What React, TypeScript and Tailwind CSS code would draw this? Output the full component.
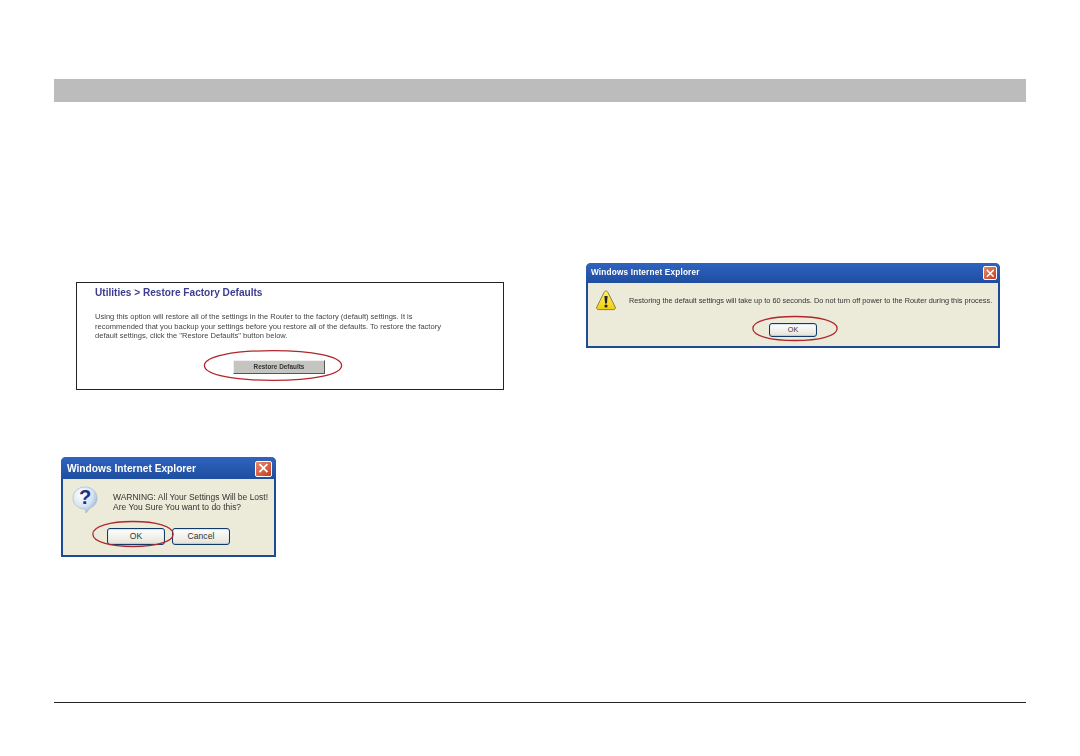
const font = { fontFamily: '"Liberation Sans", Arial, sans-serif' };

function Ellipse() {
  return (
    <svg className="absolute inset-0 w-full h-full overflow-visible" viewBox="0 0 100 100" preserveAspectRatio="none" fill="none">
      <path d="M50 2 C78 2 99 20 99 50 C99 80 78 98 50 98 C22 98 1 80 1 50 C1 20 22 2 50 2 Z" stroke="#b0262c" strokeWidth="1.3" vectorEffect="non-scaling-stroke" />
    </svg>
  );
}

function CloseBtn({ className }: { className: string }) {
  return (
    <div className={`rounded-[2px] border border-white bg-gradient-to-br from-[#e8896c] to-[#c43a1c] flex items-center justify-center shrink-0 ${className}`}>
      <svg viewBox="0 0 12 12" className="w-[72%] h-[72%]">
        <path d="M2 2 L10 10 M10 2 L2 10" stroke="#fff" strokeWidth="2.1" strokeLinecap="square" />
      </svg>
    </div>
  );
}

function XpButton({ label, className }: { label: string; className: string }) {
  return (
    <div className={`rounded-[3px] border border-[#123a68] bg-gradient-to-b from-white to-[#e6e4d8] shadow-[inset_0_-1px_1px_#b9c9e6,inset_0_1px_1px_#d6e2f5] flex items-center justify-center text-[#333] ${className}`}>
      {label}
    </div>
  );
}

function QuestionIcon() {
  return (
    <svg viewBox="0 0 26 28" className="w-[26px] h-[28px] shrink-0">
      <defs>
        <radialGradient id="q" cx="0.35" cy="0.3" r="0.8">
          <stop offset="0" stopColor="#ffffff" />
          <stop offset="0.6" stopColor="#d4e2f2" />
          <stop offset="1" stopColor="#8fa9c9" />
        </radialGradient>
      </defs>
      <path d="M13 1 C20 1 25 6 25 12 C25 18 21 21 18 22 L14 27 L13.5 23 C6 23 1 18 1 12 C1 6 6 1 13 1 Z" fill="url(#q)" stroke="#9fb3cc" strokeWidth="0.6" />
      <text x="13" y="18" textAnchor="middle" fontSize="20" fontWeight="700" fill="#1c2f8a" style={font}>?</text>
    </svg>
  );
}

function WarningIcon() {
  return (
    <svg viewBox="0 0 20 21" className="w-[20px] h-[21px] shrink-0">
      <defs>
        <linearGradient id="w" x1="0" y1="0" x2="0" y2="1">
          <stop offset="0" stopColor="#fff06a" />
          <stop offset="1" stopColor="#f2cf0c" />
        </linearGradient>
      </defs>
      <path d="M10 1 C11 1 11.6 1.8 12 2.6 L19.2 17 C19.8 18.3 19 19.6 17.6 19.6 L2.4 19.6 C1 19.6 0.2 18.3 0.8 17 L8 2.6 C8.4 1.8 9 1 10 1 Z" fill="url(#w)" stroke="#6f6a3a" strokeWidth="0.8" />
      <path d="M8.4 6 L11.6 6 L10.9 13.4 L9.1 13.4 Z" fill="#222" />
      <circle cx="10" cy="16" r="1.6" fill="#222" />
    </svg>
  );
}

export default function App() {
  return (
    <div className="w-[1080px] h-[756px] bg-white flex flex-col pt-[79px] overflow-hidden" style={font}>
      <div className="mx-[54px] h-[23px] bg-[#bcbcbc]" />

      <div className="flex-1 flex pl-[54px] pr-[54px]">
        {/* Left column */}
        <div className="w-[532px] flex flex-col">
          <div className="mt-[180px] ml-[22px] w-[428px] h-[108px] border border-[#222] bg-white pl-[18px] pt-[2px]">
            <div className="blur-[0.3px] text-[10.1px] leading-[16px] font-bold text-[#3c3c92] whitespace-nowrap">Utilities &gt; Restore Factory Defaults</div>
            <div className="blur-[0.3px] mt-[11px] w-[360px] text-[7.55px] leading-[9.6px] text-[#444]">
              <div className="whitespace-nowrap">Using this option will restore all of the settings in the Router to the factory (default) settings. It is</div>
              <div className="whitespace-nowrap">recommended that you backup your settings before you restore all of the defaults. To restore the factory</div>
              <div className="whitespace-nowrap">default settings, click the "Restore Defaults" button below.</div>
            </div>
            <div className="relative ml-[108px] mt-[9px] w-[140px] h-[31px] flex items-center justify-center">
              <div className="ml-[12px] mt-[4px] w-[92px] h-[14px] bg-[#c4c4c0] border border-[#eee] border-r-[#555] border-b-[#555] flex items-center justify-center text-[6.4px] font-bold text-[#333] blur-[0.3px]">
                Restore Defaults
              </div>
              <Ellipse />
            </div>
          </div>

          <div className="mt-[67px] ml-[7px] w-[215px] h-[100px] rounded-t-[5px] bg-[#ecead8] border-x-2 border-b-2 border-[#1f4a96] flex flex-col">
            <div className="h-[22px] -mx-[2px] pt-[1px] rounded-t-[5px] bg-gradient-to-b from-[#2f63c0] to-[#1f4e9f] flex items-center justify-between pl-[6px] pr-[4px] shrink-0">
              <span className="pt-[1px] text-[10.2px] font-bold text-white whitespace-nowrap blur-[0.3px]">Windows Internet Explorer</span>
              <CloseBtn className="w-[17px] h-[16px]" />
            </div>
            <div className="flex pl-[9px] pt-[7px]">
              <QuestionIcon />
              <div className="ml-[15px] mt-[6px] text-[8.47px] leading-[10px] text-[#333] whitespace-nowrap blur-[0.3px]">
                <div>WARNING: All Your Settings Will be Lost!</div>
                <div>Are You Sure You want to do this?</div>
              </div>
            </div>
            <div className="relative flex gap-[7px] ml-[44px] mt-[14px] text-[8.6px]">
              <XpButton label="OK" className="w-[58px] h-[17px]" />
              <XpButton label="Cancel" className="w-[58px] h-[17px]" />
              <div className="absolute -left-[15px] -top-[7px] w-[82px] h-[26px]">
                <Ellipse />
              </div>
            </div>
          </div>
        </div>

        {/* Right column */}
        <div className="w-[414px]">
          <div className="mt-[161px] h-[85px] rounded-t-[5px] bg-[#ecead8] border-x-2 border-b-2 border-[#1f4a96] flex flex-col">
            <div className="h-[20px] -mx-[2px] rounded-t-[5px] bg-gradient-to-b from-[#2f63c0] to-[#1f4e9f] flex items-center justify-between pl-[5px] pr-[3px] shrink-0">
              <span className="text-[8.2px] font-bold text-white tracking-[0.2px] whitespace-nowrap blur-[0.3px]">Windows Internet Explorer</span>
              <CloseBtn className="w-[14px] h-[14px]" />
            </div>
            <div className="flex items-center pl-[8px] pt-[7px]">
              <WarningIcon />
              <div className="ml-[13px] text-[7.34px] text-[#333] whitespace-nowrap blur-[0.3px]">
                Restoring the default settings will take up to 60 seconds. Do not turn off power to the Router during this process.
              </div>
            </div>
            <div className="relative ml-[181px] mt-[12px] w-[48px]">
              <XpButton label="OK" className="w-[48px] h-[14px] text-[7.2px]" />
              <div className="absolute -left-[17px] -top-[7px] w-[86px] h-[25px]">
                <Ellipse />
              </div>
            </div>
          </div>
        </div>
      </div>

      <div className="mx-[54px] mb-[53px] h-px bg-[#222]" />
    </div>
  );
}
